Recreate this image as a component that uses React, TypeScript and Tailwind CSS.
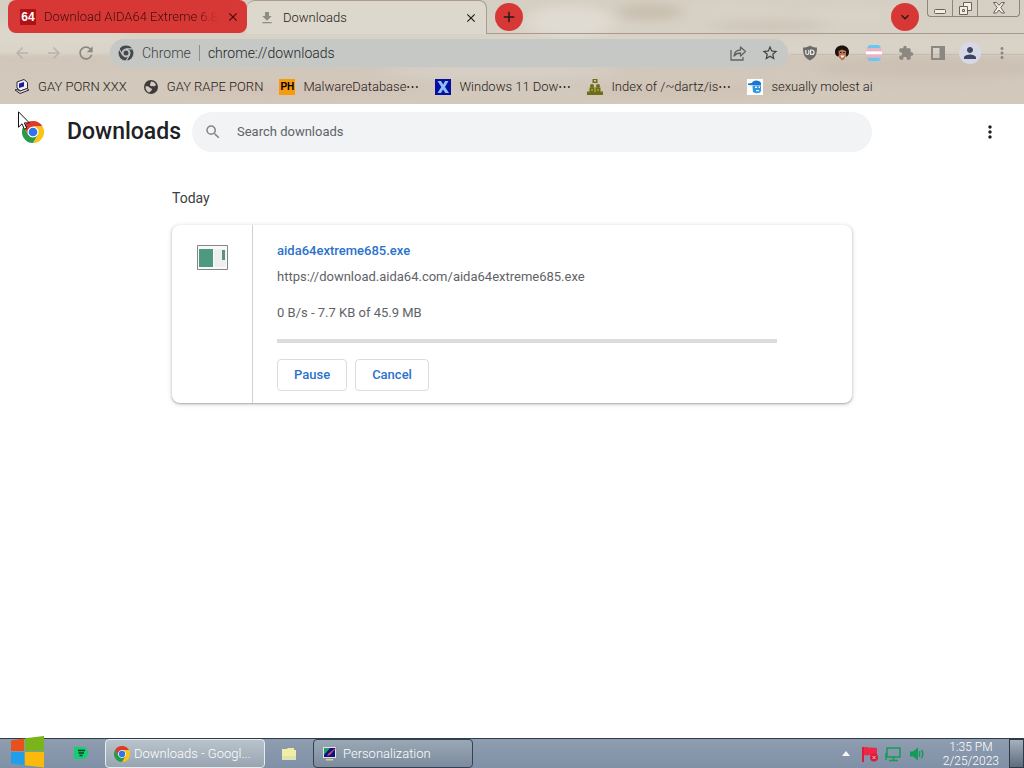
import React from 'react';
import {
    MdAdd, MdArrowBack, MdArrowForward, MdClose, MdExpandMore, MdExtension,
    MdFileDownload, MdMoreVert, MdPerson, MdRefresh, MdSearch, MdStarBorder,
} from 'react-icons/md';

interface Bookmark {
    title: string;
    icon: React.ReactNode;
}

const ChromeLogo: React.FC<{ className: string }> = ({ className }) => (
    <svg viewBox="0 0 48 48" className={className} aria-hidden="true">
        <circle cx="24" cy="24" r="12" fill="#fff" />
        <path fill="#dd3a2c" d="M24 12H44.78a23.99 23.99 0 0 0-41.56 0L13.61 30A11.99 11.99 0 0 1 24 12Z" />
        <path fill="#fcc317" d="M34.39 30 24 48A23.99 23.99 0 0 0 44.78 12H24A11.99 11.99 0 0 1 34.39 30Z" />
        <path fill="#2a9a48" d="M13.61 30 3.22 12A23.99 23.99 0 0 0 24 48L34.39 30a11.99 11.99 0 0 1-20.78 0Z" />
        <circle cx="24" cy="24" r="9.5" fill="#2f74e8" />
    </svg>
);

const ChromeMono = () => (
    <svg viewBox="0 0 48 48" className="size-4 shrink-0" aria-hidden="true">
        <g fill="#45494c" stroke="#c5c8c5" strokeWidth="3">
            <path d="M24 12H44.78a23.99 23.99 0 0 0-41.56 0L13.61 30A11.99 11.99 0 0 1 24 12Z" />
            <path d="M34.39 30 24 48A23.99 23.99 0 0 0 44.78 12H24A11.99 11.99 0 0 1 34.39 30Z" />
            <path d="M13.61 30 3.22 12A23.99 23.99 0 0 0 24 48L34.39 30a11.99 11.99 0 0 1-20.78 0Z" />
        </g>
        <circle cx="24" cy="24" r="7.5" fill="#45494c" />
    </svg>
);

// Marbled theme texture behind the tab strip and toolbars
const ThemeBackdrop = () => (
    <svg className="absolute inset-0 size-full" viewBox="0 0 1024 104" preserveAspectRatio="none" aria-hidden="true">
        <defs>
            <linearGradient id="base" x1="0" y1="0" x2="0" y2="1">
                <stop offset="0" stopColor="#d5cec2" />
                <stop offset="0.5" stopColor="#d9d3c8" />
                <stop offset="0.55" stopColor="#d0c6ba" />
                <stop offset="1" stopColor="#d3c9bd" />
            </linearGradient>
            <filter id="soft" x="-20%" y="-60%" width="140%" height="220%"><feGaussianBlur stdDeviation="8 5" /></filter>
        </defs>
        <rect width="1024" height="104" fill="url(#base)" />
        <g filter="url(#soft)">
            <ellipse cx="40" cy="36" rx="90" ry="14" fill="#ddd6ca" />
            <ellipse cx="570" cy="22" rx="44" ry="16" fill="#e0dbd2" />
            <ellipse cx="650" cy="12" rx="34" ry="8" fill="#c9bfb0" />
            <ellipse cx="730" cy="10" rx="50" ry="6" fill="#d9d2c6" />
            <ellipse cx="770" cy="26" rx="60" ry="5" fill="#cdc4b7" />
            <ellipse cx="850" cy="14" rx="44" ry="6" fill="#dad3c8" />
            <ellipse cx="300" cy="90" rx="120" ry="8" fill="#d2c3b7" />
            <ellipse cx="500" cy="72" rx="120" ry="6" fill="#d8d1c8" />
            <ellipse cx="690" cy="90" rx="110" ry="8" fill="#d0c3b6" />
            <ellipse cx="930" cy="68" rx="110" ry="10" fill="#cbc0b2" />
        </g>
        <path d="M790 54.500H1024" stroke="#b9ada0" strokeOpacity="0.5" />
    </svg>
);

const bookmarks: Bookmark[] = [
    {
        title: 'GAY PORN XXX',
        icon: (
            <svg viewBox="0 0 16 16" className="size-4">
                <path d="M3 3 10 .5l3.500 3v6l-7 2.500L3 9Z" fill="#f2f0f4" stroke="#2b2630" />
                <path d="m5 4.500 5-1.500v4.500L5 9Z" fill="#1c1ca0" />
                <path d="m1 11 5 3.500 9-3.500-2-1.500-7 2.500-3-1.500Z" fill="#e4e0e8" stroke="#2b2630" />
            </svg>
        ),
    },
    {
        title: 'GAY RAPE PORN',
        icon: (
            <svg viewBox="0 0 16 16" className="size-4">
                <circle cx="8" cy="8" r="7" fill="#3c3b3a" />
                <path d="M2.500 7.500c2-.5 3.500 0 4.500 1.500 1.500 0 2.500 1 1.500 2.500-1 .5-1 1.500-2.500 2-2.500-1-3.800-3.500-3.500-6Z" fill="#d3c9bd" />
                <path d="M8 2.500c2.500 0 4.300 1.500 5 3.500-1 1.500-2.500 1.500-3.500 1C8 7.500 6.500 6.500 7 5.500Z" fill="#d3c9bd" />
            </svg>
        ),
    },
    {
        title: 'MalwareDatabase⋯',
        icon: <span className="flex size-4 items-center justify-center bg-[#f79b0c] font-['Liberation_Sans'] text-[10px] font-bold text-black">PH</span>,
    },
    {
        title: 'Windows 11 Dow⋯',
        icon: (
            <svg viewBox="0 0 16 16" className="size-4">
                <path d="M0 0h16v16H0Z" fill="#060fa0" />
                <path d="M2.500 2h3.500l2.200 3.500L10 2h3.500L10 8l4 6h-3.700L8 10.500 6 14H2.500L6.300 8Z" fill="#8fbdf5" />
            </svg>
        ),
    },
    {
        title: 'Index of /~dartz/is⋯',
        icon: (
            <svg viewBox="0 0 16 16" className="size-4" fill="#6f6d17">
                <path d="M5.500 0h5v4h-5Z" />
                <path d="M7 1h2v1.500H7Z" fill="#d3c9bd" />
                <circle cx="5" cy="7" r="2" />
                <circle cx="11" cy="7" r="2" />
                <path d="M2.500 8.500h11v4H16V16H0v-3.500h2.500Z" />
                <path d="M7.500 9h1v4h-1ZM4.500 10h1v2h-1ZM10.500 10h1v2h-1Z" fill="#bdb968" />
            </svg>
        ),
    },
    {
        title: 'sexually molest ai',
        icon: (
            <svg viewBox="0 0 16 16" className="size-4">
                <path d="M0 0h16v16H0Z" fill="#fdfdfd" />
                <path d="M1 4.500 5 4c.5-3 7-3.500 9 0v2.500H8L1 6Z" fill="#1677d2" />
                <path d="M5.500 7H14v5c-1 2-3 2.500-6 2L6 13Z" fill="#2a95e6" />
                <path d="M8 7.500h2v1.500H8ZM11.500 7.500H13v1.500h-1.500ZM9 11h3v1.200H9Z" fill="#fff" />
            </svg>
        ),
    },
];

const TabStrip = () => (
    <div className="flex h-[34px] items-start pl-2 font-light">
        <div className="flex h-[33px] w-[239px] items-center rounded-lg bg-[#d83835] pr-2 pl-3 text-[#3d0f0c]">
            <span className="flex size-4 shrink-0 items-center justify-center bg-[#b01116] font-['Liberation_Sans'] text-xs font-bold text-white">64</span>
            <span className="ml-2 flex-1 text-[13px] whitespace-nowrap [mask-image:linear-gradient(to_right,#000_88%,transparent)]">Download AIDA64 Extreme 6.8</span>
            <button aria-label="Close tab" className="ml-2 shrink-0"><MdClose className="size-3.5" /></button>
        </div>
        <div className="flex h-[34px] w-60 items-center rounded-t-lg border-t border-r border-[#a89d92] bg-[#dfd9ce]/80 pr-2 pl-3">
            <MdFileDownload className="size-4 shrink-0 text-[#8f8c87]" />
            <span className="ml-2 flex-1 text-[13px]">Downloads</span>
            <button aria-label="Close tab" className="shrink-0"><MdClose className="size-3.5" /></button>
        </div>
        <div className="flex h-[34px] flex-1 items-start border-b border-[#a89a8e] pl-2">
            <button aria-label="New tab" className="mt-[3px] flex size-7 items-center justify-center rounded-full bg-[#d83835]"><MdAdd className="size-[18px]" /></button>
            <button aria-label="Search tabs" className="mt-[3px] ml-auto flex size-7 items-center justify-center rounded-full bg-[#d83835]"><MdExpandMore className="size-4" /></button>
            <div className="mr-1 ml-2 flex h-[17px] w-[93px] divide-x divide-[#8f8478] rounded-b border border-t-0 border-[#8f8478]">
                <button aria-label="Minimize" className="flex w-[25px] items-center justify-center">
                    <svg viewBox="0 0 12 14" className="h-3.5 w-3"><rect x=".5" y="8.500" width="11" height="4" rx="1" fill="#f2eee6" stroke="#6b6259" /></svg>
                </button>
                <button aria-label="Restore" className="flex w-[25px] items-center justify-center">
                    <svg viewBox="0 0 13 13" className="size-[13px]" fill="#f2eee6" stroke="#6b6259">
                        <path d="M4.500.500h8v8h-8Z" />
                        <path d="M.500 4.500h8v8h-8Z" />
                        <path d="M3.500 7.500h2v2h-2Z" fill="none" />
                    </svg>
                </button>
                <button aria-label="Close" className="flex flex-1 items-center justify-center">
                    <svg viewBox="0 0 12 12" className="size-3"><path d="M.500.500h3L6 3.300 8.500.500h3L7.800 5.500l3.700 5.500h-3L6 8l-2.500 3h-3l3.700-5.500Z" fill="#f2eee6" stroke="#6b6259" /></svg>
                </button>
            </div>
        </div>
    </div>
);

const Toolbar = () => (
    <div className="flex h-[37px] items-center px-1.5 text-[#8b8781]">
        <button aria-label="Back" className="flex w-8 justify-center text-[#b9b3aa]"><MdArrowBack className="size-[18px]" /></button>
        <button aria-label="Forward" className="flex w-8 justify-center text-[#b9b3aa]"><MdArrowForward className="size-[18px]" /></button>
        <button aria-label="Reload" className="flex w-8 justify-center"><MdRefresh className="size-5" /></button>
        <div className="mr-1.5 ml-2 flex h-7 flex-1 items-center rounded-full bg-[#c5c8c5] pr-0.5 pl-2 text-sm font-light text-[#3f4244]">
            <ChromeMono />
            <span className="ml-2">Chrome</span>
            <span className="mx-2 h-4 w-px bg-[#8c9090]" />
            <input aria-label="Address" defaultValue="chrome://downloads" className="min-w-0 flex-1 bg-transparent text-[#232628] outline-none" />
            <button aria-label="Share" className="flex w-8 justify-center">
                <svg viewBox="0 0 18 18" className="size-[18px]" fill="none" stroke="#5f6365" strokeWidth="1.3">
                    <path d="M2 6v10h12v-3" />
                    <path d="M5 12c.5-4 3-6 6.500-6V3l5 4.500-5 4.500V9C8.500 9 6.500 10 5 12Z" strokeLinejoin="round" />
                </svg>
            </button>
            <button aria-label="Bookmark this tab" className="flex w-8 justify-center"><MdStarBorder className="size-[18px]" /></button>
        </div>
        <button aria-label="uBlock Origin" className="flex w-8 justify-center">
            <svg viewBox="0 0 16 16" className="size-4">
                <path d="M8 .500c2 1.500 4 2 7 2 0 6-1 10-7 13C2 12.500 1 8.500 1 2.500c3 0 5-.5 7-2Z" fill="#6d6b68" />
                <path d="M3.800 5v3a1.500 1.500 0 0 0 3 0V5M8.600 5v4.500h1.200a2 2 0 0 0 0-4.500Z" fill="none" stroke="#eee" strokeWidth="1.200" />
            </svg>
        </button>
        <button aria-label="Portrait extension" className="flex w-8 justify-center">
            <svg viewBox="0 0 16 16" className="size-4">
                <path d="M8 .500c4 0 7 2.500 7 6.500 0 2-1 4-2.500 5L11 6 6 6.500l-1.500 5C2 11.500 1 9 1 7 1 3 4 .500 8 .500Z" fill="#1d1210" />
                <path d="M4.500 6 8 4.500l4 1.500v5l-2 3.500-2 1-3-3Z" fill="#b77752" />
                <path d="M6 7.500h1.500M9.300 7.500h1.500" stroke="#2a1611" />
                <path d="M6.500 10.500h4L9 12.500H7.500Z" fill="#fff" />
            </svg>
        </button>
        <button aria-label="Flag extension" className="flex w-8 justify-center">
            <svg viewBox="0 0 16 16" className="size-4">
                <path d="M3 0h10l2 3.200H1Z" fill="#68c8ef" />
                <path d="M1 3.200h14l1 3.200H0Z" fill="#eeb0c4" />
                <path d="M0 6.400h16v3.200H0Z" fill="#fff" />
                <path d="M0 9.600h16l-1 3.200H1Z" fill="#eeb0c4" />
                <path d="M1 12.800h14L13 16H3Z" fill="#68c8ef" />
            </svg>
        </button>
        <button aria-label="Extensions" className="flex w-8 justify-center"><MdExtension className="size-4" /></button>
        <button aria-label="Side panel" className="flex w-8 justify-center">
            <svg viewBox="0 0 14 14" className="size-3.5"><path d="M1 1h12v12H1Z" fill="none" stroke="#8b8781" strokeWidth="2" /><path d="M8.500 1H13v12H8.500Z" fill="#8b8781" /></svg>
        </button>
        <button aria-label="Profile" className="flex w-8 justify-center">
            <span className="flex size-[22px] items-center justify-center rounded-full bg-[#d6d8e6] text-[#3d4560]"><MdPerson className="size-[18px]" /></span>
        </button>
        <button aria-label="Chrome menu" className="flex w-8 justify-center"><MdMoreVert className="size-[18px]" /></button>
    </div>
);

const BookmarksBar = () => (
    <nav aria-label="Bookmarks" className="flex h-[33px] items-center gap-4 overflow-hidden px-3.5 pb-0.5 text-[13px] font-light">
        {bookmarks.map(b => (
            <a key={b.title} href="#" className="flex shrink-0 items-center gap-2 whitespace-nowrap">
                {b.icon}
                {b.title}
            </a>
        ))}
    </nav>
);

const DownloadsPage = () => (
    <main className="flex-1 bg-white text-[13px]">
        <header className="flex h-14 items-center">
            <div className="flex w-48 shrink-0 items-center pl-[22px]">
                <ChromeLogo className="size-[22px] shrink-0" />
                <h1 className="ml-[23px] text-[23px] font-medium text-[#202124]">Downloads</h1>
            </div>
            <label className="flex h-10 w-full max-w-[680px] items-center rounded-full bg-[#f1f3f4] px-3">
                <MdSearch className="size-[18px] shrink-0 text-[#80868b]" />
                <input type="search" aria-label="Search downloads" placeholder="Search downloads" className="ml-[15px] min-w-0 flex-1 bg-transparent outline-none placeholder:text-[#5f6368]" />
            </label>
            <button aria-label="More actions" className="mr-6 ml-auto shrink-0 text-[#202124]"><MdMoreVert className="size-5" /></button>
        </header>

        <section className="mx-auto w-full max-w-[680px] pt-7">
            <h2 className="text-sm leading-5 text-[#3c4043]">Today</h2>
            <article className="mt-[17px] flex rounded-lg bg-white shadow-[0_1px_2px_rgba(60,64,67,0.35),0_1px_4px_1px_rgba(60,64,67,0.15)]">
                <div className="flex w-[81px] shrink-0 justify-center border-r border-[#d0d0d0] pt-5">
                    <svg viewBox="0 0 31 25" className="h-[25px] w-[31px]">
                        <path d="M.500.500h30v24H.500Z" fill="#fafafa" stroke="#858585" />
                        <path d="M2 4h14v18H2Z" fill="#4d9a7f" />
                        <path d="M17 4h12v18H17Z" fill="#eef0f0" />
                        <path d="M25 5h3v10h-3Z" fill="#5f9180" />
                    </svg>
                </div>
                <div className="min-w-0 flex-1 px-6 pt-4 pb-3 text-[#5f6368]">
                    <a href="#" className="block leading-5 font-medium text-[#2a72cc]">aida64extreme685.exe</a>
                    <a href="#" className="mt-1.5 block leading-5">https://download.aida64.com/aida64extreme685.exe</a>
                    <p className="mt-4 leading-5">0 B/s - 7.7 KB of 45.9 MB</p>
                    <div role="progressbar" aria-label="Download progress" aria-valuenow={0} className="mt-4 h-1 max-w-[500px] bg-[#dcdcdc]" />
                    <div className="mt-4 flex gap-2 font-medium text-[#2a72cc]">
                        <button className="h-8 rounded border border-[#dadce0] px-4">Pause</button>
                        <button className="h-8 rounded border border-[#dadce0] px-4">Cancel</button>
                    </div>
                </div>
            </article>
        </section>
    </main>
);

const Taskbar = () => (
    <footer className="flex h-[30px] items-center border-t border-[#2d3a4a] bg-linear-to-b from-[#8f9db0] to-[#8090a6] text-[13px] font-light text-white">
        <button aria-label="Start" className="ml-[11px] shrink-0 self-end">
            <svg viewBox="0 0 33 32" className="h-8 w-[33px]">
                <path fill="#e8501c" d="M0 4.500 13 2.500V15H0Z" />
                <path fill="#78b41a" d="M14 2.300 33 0v15H14Z" />
                <path fill="#1f9fea" d="M0 16h13v13L0 27.500Z" />
                <path fill="#fbb90c" d="M14 16h19v15.500L14 29.200Z" />
            </svg>
        </button>
        <button aria-label="Spotify" className="ml-[21px] flex w-8 shrink-0 justify-center">
            <svg viewBox="0 0 16 16" className="size-4">
                <path d="M1 1h8c4 0 6 3 6 6s-2 6-6 6H1Z" fill="#12cf70" />
                <path d="M5 4.500h7M5.500 7h5.500M6.500 9.500h3" stroke="#15352a" strokeWidth="1.300" />
            </svg>
        </button>
        <button className="ml-2 flex h-[29px] w-40 shrink-0 items-center rounded-sm border border-[#e6ebee] bg-linear-to-b from-[#b9c3cb] to-[#98a5b1] px-2">
            <ChromeLogo className="size-4 shrink-0" />
            <span className="ml-1 whitespace-nowrap">Downloads - Googl...</span>
        </button>
        <button aria-label="File Explorer" className="ml-2 flex w-8 shrink-0 justify-center">
            <svg viewBox="0 0 16 16" className="size-4"><path d="M1 3h5l1-1h6v2h2v10H1Z" fill="#f1eda4" /><path d="M1 10h14v4H1Z" fill="#dfe3b0" /></svg>
        </button>
        <button className="ml-2 flex h-[29px] w-40 shrink-0 items-center rounded-sm border border-[#344354] bg-linear-to-b from-[#9aa7b5] to-[#7c8b9d] px-2">
            <svg viewBox="0 0 16 16" className="size-4 shrink-0">
                <path d="M1 1h13v11H1Z" fill="#dfe4e6" />
                <path d="M2 2h11v9H2Z" fill="#0c1085" />
                <path d="M2 2h6L2 9Z" fill="#21a45a" />
                <path d="m15.500.500-9 7-1.500 2.500 3-1Z" fill="#d3486a" />
                <path d="M4 13h7v1.500H4Z" fill="#d9d580" />
            </svg>
            <span className="ml-[5px] whitespace-nowrap">Personalization</span>
        </button>
        <div className="ml-auto flex h-full shrink-0 items-center">
            <button aria-label="Show hidden icons" className="mr-[11px]"><svg viewBox="0 0 8 5" className="h-[5px] w-2"><path d="M4 0 8 5H0Z" fill="#f4f6f8" /></svg></button>
            <button aria-label="Action Center" className="w-6">
                <svg viewBox="0 0 18 16" className="h-4 w-[18px]">
                    <path d="M1 1h2v15H1Z" fill="#d81e3c" />
                    <path d="M3 1.500c3-1.500 4 1 7 0l6 .500v8c-5 0-5-1-7-1s-4 1-6 0Z" fill="#ee2745" />
                    <circle cx="13" cy="11.500" r="4" fill="#d81e3c" />
                    <path d="m11.500 10 3 3m0-3-3 3" stroke="#e9b7c0" />
                </svg>
            </button>
            <button aria-label="Network" className="w-6">
                <svg viewBox="0 0 16 16" className="size-4" fill="none" stroke="#159a5a" strokeWidth="1.500"><path d="M2 2h13v9H2ZM8.500 11v3M4 14.500h9M1 7v7" /></svg>
            </button>
            <button aria-label="Volume" className="w-6">
                <svg viewBox="0 0 16 16" className="size-4"><path d="M1 5.500h3l5-4v13l-5-4H1Z" fill="#159a5a" /><path d="M10.500 5v6M12.500 4q2.500 4 0 8" fill="none" stroke="#159a5a" strokeWidth="1.500" /></svg>
            </button>
            <button className="mx-2.5 text-center text-xs leading-[14px]">
                <span className="block">1:35 PM</span>
                <span className="block">2/25/2023</span>
            </button>
            <button aria-label="Show desktop" className="h-full w-[15px] border border-[#2d3a4a] bg-linear-to-b from-[#a5b0bc] to-[#5f6d7c]" />
        </div>
    </footer>
);

const Cursor = () => (
    <svg viewBox="0 0 12 19" className="pointer-events-none absolute top-[111px] left-[18px] h-[19px] w-3" aria-hidden="true">
        <path d="M.500.800v15.400l3.500-3.400 2.300 5.400 2.400-1-2.300-5.300h5Z" fill="#fff" stroke="#111" />
    </svg>
);

export default function App() {
    return (
        <div className="relative flex min-h-screen flex-col font-[Roboto,sans-serif]">
            <div className="relative text-[#1f1b18]">
                <ThemeBackdrop />
                <div className="relative">
                    <TabStrip />
                    <Toolbar />
                    <BookmarksBar />
                </div>
            </div>
            <DownloadsPage />
            <Taskbar />
            <Cursor />
        </div>
    );
}
